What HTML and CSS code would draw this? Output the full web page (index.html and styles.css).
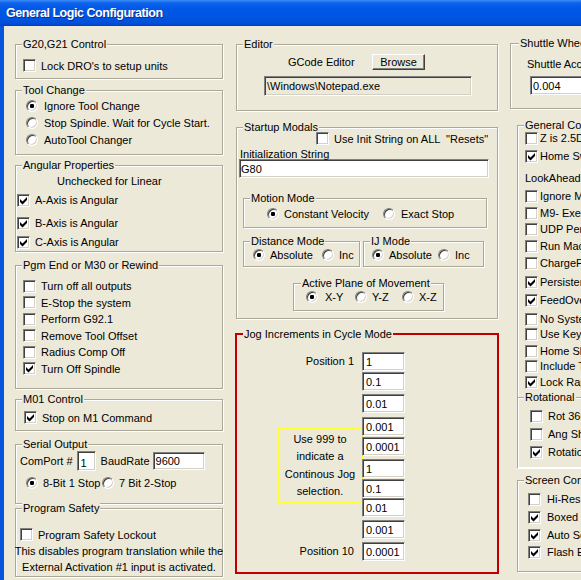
FILE: index.html
```html
<!DOCTYPE html>
<html>
<head>
<meta charset="utf-8">
<title>General Logic Configuration</title>
<link rel="stylesheet" href="styles.css">
</head>
<body>
<div class="window">
  <div class="titlebar"><span class="title">General Logic Configuration</span></div>
  <div class="client">

    <div class="col col-left">
      <fieldset class="group">
        <legend>G20,G21 Control</legend>
        <div class="body b-g20">
          <div class="row"><span class="cb"></span><span class="lbl">Lock DRO's to setup units</span></div>
        </div>
      </fieldset>

      <fieldset class="group mt5">
        <legend>Tool Change</legend>
        <div class="body b-tool">
          <div class="row"><span class="rb on"></span><span class="lbl">Ignore Tool Change</span></div>
          <div class="row"><span class="rb"></span><span class="lbl">Stop Spindle. Wait for Cycle Start.</span></div>
          <div class="row"><span class="rb"></span><span class="lbl">AutoTool Changer</span></div>
        </div>
      </fieldset>

      <fieldset class="group mt4">
        <legend>Angular Properties</legend>
        <div class="body b-ang">
          <div class="row note-row">Unchecked for Linear</div>
          <div class="row h16 mt3"><span class="cb"><svg viewBox="0 0 9 9"><path d="M1 3 L3.5 5.5 L8 1 L8 4 L3.5 8.5 L1 6 Z"/></svg></span><span class="lbl">A-Axis is Angular</span></div>
          <div class="row h16 mt7"><span class="cb"><svg viewBox="0 0 9 9"><path d="M1 3 L3.5 5.5 L8 1 L8 4 L3.5 8.5 L1 6 Z"/></svg></span><span class="lbl">B-Axis is Angular</span></div>
          <div class="row h16 mt3"><span class="cb"><svg viewBox="0 0 9 9"><path d="M1 3 L3.5 5.5 L8 1 L8 4 L3.5 8.5 L1 6 Z"/></svg></span><span class="lbl">C-Axis is Angular</span></div>
        </div>
      </fieldset>

      <fieldset class="group mt7">
        <legend>Pgm End or M30 or Rewind</legend>
        <div class="body b-pgm">
          <div class="row h165"><span class="cb"></span><span class="lbl">Turn off all outputs</span></div>
          <div class="row h165"><span class="cb"></span><span class="lbl">E-Stop the system</span></div>
          <div class="row h165"><span class="cb"></span><span class="lbl">Perform G92.1</span></div>
          <div class="row h165"><span class="cb"></span><span class="lbl">Remove Tool Offset</span></div>
          <div class="row h165"><span class="cb"></span><span class="lbl">Radius Comp Off</span></div>
          <div class="row h165"><span class="cb"><svg viewBox="0 0 9 9"><path d="M1 3 L3.5 5.5 L8 1 L8 4 L3.5 8.5 L1 6 Z"/></svg></span><span class="lbl">Turn Off Spindle</span></div>
        </div>
      </fieldset>

      <fieldset class="group mt4">
        <legend>M01 Control</legend>
        <div class="body b-m01">
          <div class="row"><span class="cb"><svg viewBox="0 0 9 9"><path d="M1 3 L3.5 5.5 L8 1 L8 4 L3.5 8.5 L1 6 Z"/></svg></span><span class="lbl">Stop on M1 Command</span></div>
        </div>
      </fieldset>

      <fieldset class="group mt7">
        <legend>Serial Output</legend>
        <div class="body b-serial">
          <div class="row serial-row">
            <span>ComPort #</span>
            <span class="tf tf-com">1</span>
            <span class="baud-lbl">BaudRate</span>
            <span class="tf tf-baud">9600</span>
          </div>
          <div class="row mt3 serial-radios">
            <span class="ritem ritem-8"><span class="rb on"></span><span class="lbl">8-Bit 1 Stop</span></span>
            <span class="ritem"><span class="rb"></span><span class="lbl">7 Bit 2-Stop</span></span>
          </div>
        </div>
      </fieldset>

      <fieldset class="group mt-2">
        <legend>Program Safety</legend>
        <div class="body b-safety">
          <div class="row safety-row"><span class="cb"></span><span class="lbl">Program Safety Lockout</span></div>
          <div class="note">This disables program translation while the</div>
          <div class="note">External Activation #1 input is activated.</div>
        </div>
      </fieldset>
    </div>

    <div class="col col-mid">
      <fieldset class="group">
        <legend>Editor</legend>
        <div class="body b-editor">
          <div class="row h16 editor-row">
            <span class="editor-lbl">GCode Editor</span>
            <span class="btn">Browse</span>
          </div>
          <div class="tf tf-path">\Windows\Notepad.exe</div>
        </div>
      </fieldset>

      <fieldset class="group mt10">
        <legend>Startup Modals</legend>
        <div class="body b-startup">
          <div class="row mt-4 init-all"><span class="cb"></span><span class="lbl pre">Use Init String on ALL  "Resets"</span></div>
          <div class="row h13 init-lbl">Initialization String</div>
          <div class="tf tf-init">G80</div>

          <fieldset class="group motion">
            <legend>Motion Mode</legend>
            <div class="body b-small">
              <div class="row motion-row">
                <span class="ritem ritem-cv"><span class="rb on"></span><span class="lbl">Constant Velocity</span></span>
                <span class="ritem"><span class="rb"></span><span class="lbl l6">Exact Stop</span></span>
              </div>
            </div>
          </fieldset>

          <div class="modes">
            <fieldset class="group dist">
              <legend>Distance Mode</legend>
              <div class="body b-tiny">
                <div class="row mt-2 dist-row">
                  <span class="ritem ritem-abs"><span class="rb on"></span><span class="lbl">Absolute</span></span>
                  <span class="ritem"><span class="rb"></span><span class="lbl">Inc</span></span>
                </div>
              </div>
            </fieldset>
            <fieldset class="group ij">
              <legend>IJ Mode</legend>
              <div class="body b-tiny">
                <div class="row mt-2 ij-row">
                  <span class="ritem ritem-ij"><span class="rb on"></span><span class="lbl">Absolute</span></span>
                  <span class="ritem"><span class="rb"></span><span class="lbl">Inc</span></span>
                </div>
              </div>
            </fieldset>
          </div>

          <fieldset class="group plane">
            <legend>Active Plane of Movement</legend>
            <div class="body b-small">
              <div class="row mt-2 plane-row">
                <span class="ritem ritem-xy"><span class="rb on"></span><span class="lbl l7">X-Y</span></span>
                <span class="ritem ritem-yz"><span class="rb"></span><span class="lbl">Y-Z</span></span>
                <span class="ritem"><span class="rb"></span><span class="lbl">X-Z</span></span>
              </div>
            </div>
          </fieldset>
        </div>
      </fieldset>

      <fieldset class="group jog mt8">
        <legend>Jog Increments in Cycle Mode</legend>
        <div class="body b-jog">
          <div class="jog-left">
            <div class="pos-lbl">Position 1</div>
            <div class="hint">
              <span>Use 999 to</span>
              <span>indicate a</span>
              <span>Continous Jog</span>
              <span>selection.</span>
            </div>
            <div class="pos-lbl pos-10">Position 10</div>
          </div>
          <div class="jog-fields">
            <span class="tf tf-jog">1</span>
            <span class="tf tf-jog">0.1</span>
            <span class="tf tf-jog">0.01</span>
            <span class="tf tf-jog">0.001</span>
            <span class="tf tf-jog">0.0001</span>
            <span class="tf tf-jog">1</span>
            <span class="tf tf-jog">0.1</span>
            <span class="tf tf-jog">0.01</span>
            <span class="tf tf-jog">0.001</span>
            <span class="tf tf-jog">0.0001</span>
          </div>
        </div>
      </fieldset>
    </div>

    <div class="col col-right">
      <fieldset class="group shuttle">
        <legend>Shuttle Wheel Setting</legend>
        <div class="body b-shuttle">
          <div class="row h13 shuttle-lbl">Shuttle Accel</div>
          <div class="tf tf-shuttle">0.004</div>
        </div>
      </fieldset>

      <fieldset class="group general mt10">
        <legend>General Configuration</legend>
        <div class="body b-general">
          <div class="row h16 mt-2"><span class="cb"></span><span class="lbl l2">Z is 2.5D on Output #6</span></div>
          <div class="row h16 mt2"><span class="cb"><svg viewBox="0 0 9 9"><path d="M1 3 L3.5 5.5 L8 1 L8 4 L3.5 8.5 L1 6 Z"/></svg></span><span class="lbl l2">Home Sw. Safety</span></div>
          <div class="row h16 mt6">LookAhead&nbsp;&nbsp;20&nbsp;&nbsp;Lines</div>
          <div class="row h16 mt2"><span class="cb"></span><span class="lbl l2">Ignore M calls while loading</span></div>
          <div class="row h16 mt1"><span class="cb"></span><span class="lbl l2">M9- Execute Macro</span></div>
          <div class="row h16"><span class="cb"></span><span class="lbl l2">UDP Pendant</span></div>
          <div class="row h16 mt1"><span class="cb"></span><span class="lbl l2">Run Macropump</span></div>
          <div class="row h16 mt1"><span class="cb"></span><span class="lbl l2">ChargePump2 On</span></div>
          <div class="row h16 mt3"><span class="cb"><svg viewBox="0 0 9 9"><path d="M1 3 L3.5 5.5 L8 1 L8 4 L3.5 8.5 L1 6 Z"/></svg></span><span class="lbl l2">Persistent Jog Mode</span></div>
          <div class="row h16 mt2"><span class="cb"><svg viewBox="0 0 9 9"><path d="M1 3 L3.5 5.5 L8 1 L8 4 L3.5 8.5 L1 6 Z"/></svg></span><span class="lbl l2">FeedOverride Persists</span></div>
          <div class="row h16 mt3"><span class="cb"></span><span class="lbl l2">No System Reset</span></div>
          <div class="row h16 mt-1"><span class="cb"></span><span class="lbl l2">Use Key Clicks</span></div>
          <div class="row h16 mt1"><span class="cb"></span><span class="lbl l2">Home Slave with Master</span></div>
          <div class="row h16 mt-1"><span class="cb"></span><span class="lbl l2">Include Threads</span></div>
          <div class="row h16"><span class="cb"><svg viewBox="0 0 9 9"><path d="M1 3 L3.5 5.5 L8 1 L8 4 L3.5 8.5 L1 6 Z"/></svg></span><span class="lbl l2">Lock Rapid FRO</span></div>

          <fieldset class="group rot mt1">
            <legend>Rotational</legend>
            <div class="body b-rot">
              <div class="row h16 mt4"><span class="cb"></span><span class="lbl">Rot 360 Rollover</span></div>
              <div class="row h16 mt2"><span class="cb"></span><span class="lbl">Ang Short Rot on G0</span></div>
              <div class="row h16 mt2"><span class="cb"><svg viewBox="0 0 9 9"><path d="M1 3 L3.5 5.5 L8 1 L8 4 L3.5 8.5 L1 6 Z"/></svg></span><span class="lbl">Rotational Soft Limits</span></div>
            </div>
          </fieldset>
        </div>
      </fieldset>

      <fieldset class="group screen mt6">
        <legend>Screen Controls</legend>
        <div class="body b-screen">
          <div class="row h16 mt4"><span class="cb"></span><span class="lbl l6">Hi-Res Jog</span></div>
          <div class="row h16 mt2"><span class="cb"><svg viewBox="0 0 9 9"><path d="M1 3 L3.5 5.5 L8 1 L8 4 L3.5 8.5 L1 6 Z"/></svg></span><span class="lbl l6">Boxed DRO</span></div>
          <div class="row h16 mt2"><span class="cb"><svg viewBox="0 0 9 9"><path d="M1 3 L3.5 5.5 L8 1 L8 4 L3.5 8.5 L1 6 Z"/></svg></span><span class="lbl l6">Auto Screen Enlarge</span></div>
          <div class="row h16 mt1"><span class="cb"><svg viewBox="0 0 9 9"><path d="M1 3 L3.5 5.5 L8 1 L8 4 L3.5 8.5 L1 6 Z"/></svg></span><span class="lbl l6">Flash Errors</span></div>
        </div>
      </fieldset>
    </div>

  </div>
</div>
</body>
</html>
```

FILE: styles.css
```css
* { box-sizing: border-box; }
html, body { margin: 0; padding: 0; }
body {
  width: 581px;
  height: 580px;
  overflow: hidden;
  background: #ECE9D8;
  font-family: "Liberation Sans", Arial, sans-serif;
  font-size: 11px;
  color: #000;
}
.window { width: 581px; height: 580px; display: flex; flex-direction: column; }
.titlebar {
  height: 26px;
  flex: none;
  display: flex;
  align-items: center;
  padding-left: 6px;
  background: linear-gradient(180deg, #3A8AF6 0px, #0D63EC 3px, #0058E6 8px, #0055E3 17px, #0050DA 23px, #0040C0 26px);
}
.title {
  color: #fff;
  font-weight: bold;
  font-size: 12.5px;
  letter-spacing: -0.45px;
  text-shadow: 1px 1px 0 #0B2C8F;
  white-space: nowrap;
}
.client {
  flex: 1;
  display: flex;
  align-items: flex-start;
  border-left: 4px solid #0855DD;
  overflow: hidden;
}
.col { flex: none; display: flex; flex-direction: column; }
.col-left { width: 208px; margin-left: 11px; padding-top: 12px; }
.col-mid { width: 262px; margin-left: 13px; padding-top: 12px; }
.col-right { width: 230px; margin-left: 12px; padding-top: 11px; }

.group {
  margin: 0;
  padding: 0;
  min-width: 0;
  border: 1px solid #ACA899;
  box-shadow: inset 1px 1px 0 #fff, 1px 1px 0 #fff;
}
.group > legend {
  margin-left: 6px;
  padding: 0 1px;
  height: 13px;
  line-height: 13px;
  background: #ECE9D8;
  white-space: nowrap;
}

.mt-4 { margin-top: -4px; }
.mt-2 { margin-top: -2px; }
.mt-1 { margin-top: -1px; }
.mt1 { margin-top: 1px; }
.mt2 { margin-top: 2px; }
.mt3 { margin-top: 3px; }
.mt4 { margin-top: 4px; }
.mt5 { margin-top: 5px; }
.mt6 { margin-top: 6px; }
.mt7 { margin-top: 7px; }
.mt8 { margin-top: 8px; }
.mt10 { margin-top: 10px; }

.row { display: flex; align-items: center; height: 17px; white-space: nowrap; flex: none; }
.row.h16 { height: 16px; }
.row.h165 { height: 16.5px; }
.row.h13 { height: 13px; }
.lbl { margin-left: 5px; }
.lbl.l2 { margin-left: 2px; }
.lbl.l6 { margin-left: 6px; }
.lbl.l7 { margin-left: 7px; }
.pre { white-space: pre; }

.cb {
  flex: none;
  width: 13px;
  height: 13px;
  padding: 1px;
  display: flex;
  background: #fff;
  border: 1px solid;
  border-color: #808080 #fff #fff #808080;
  box-shadow: inset 1px 1px 0 #404040, inset -1px -1px 0 #D4D0C8;
}
.cb svg { width: 9px; height: 9px; display: block; fill: #000; }
.rb {
  flex: none;
  width: 12px;
  height: 12px;
  border-radius: 50%;
  background: #fff;
  border: 1px solid;
  border-color: #808080 #fff #fff #808080;
  box-shadow: inset 1px 1px 0 #404040, inset -1px -1px 0 #D4D0C8;
}
.rb.on { background: radial-gradient(circle at 50% 50%, #000 0, #000 2px, #fff 2.4px); }
.ritem { display: flex; align-items: center; flex: none; }

.tf {
  flex: none;
  display: flex;
  align-items: center;
  white-space: nowrap;
  overflow: hidden;
  padding-left: 2px;
  background: #fff;
  border: 1px solid;
  border-color: #808080 #fff #fff #808080;
  box-shadow: inset 1px 1px 0 #404040, inset -1px -1px 0 #D4D0C8;
}
.btn {
  flex: none;
  width: 53px;
  height: 16px;
  display: flex;
  align-items: center;
  justify-content: center;
  background: #ECE9D8;
  border: 1px solid;
  border-color: #fff #404040 #404040 #fff;
  box-shadow: inset -1px -1px 0 #808080;
}

/* left column */
.b-g20 { padding: 6px 0 4px 7px; }
.b-tool { padding: 0 0 6px 10px; }
.b-tool .lbl { margin-left: 6px; }
.b-ang { padding: 0 0 1px 1px; }
.note-row { padding-left: 40px; }
.b-pgm { padding: 6px 0 11px 7px; }
.b-m01 { padding: 3px 0 4px 8px; }
.b-serial { padding: 0 0 12px 4px; }
.serial-row { height: 20px; }
.tf-com { width: 19px; height: 20px; margin-left: 4px; padding-top: 4px; padding-left: 3px; }
.baud-lbl { margin-left: 5px; }
.tf-baud { width: 52px; height: 18px; margin-left: 3px; }
.serial-radios { padding-left: 6px; }
.ritem-8 { width: 76px; }
.b-safety { padding: 11px 0 1px 0; }
.safety-row { padding-left: 4px; }
.note { display: flex; justify-content: center; height: 16px; line-height: 16px; white-space: nowrap; }

/* middle column */
.b-editor { padding: 3px 0 14px 0; }
.editor-row { padding-left: 51px; }
.editor-lbl { width: 84px; flex: none; }
.tf-path { width: 208px; height: 20px; margin: 6px 0 0 27px; background: #ECE9D8; }
.b-startup { padding: 0 0 7px 0; }
.init-all { padding-left: 79px; }
.init-lbl { padding-left: 3px; }
.tf-init { width: 250px; height: 19px; margin: -1px 0 0 2px; padding-left: 1px; }
.motion { width: 244px; margin: 14px 0 0 6px; }
.b-small { padding: 0 0 5px 0; }
.b-tiny { padding: 0 0 3px 0; }
.motion-row { padding-left: 23px; }
.ritem-cv { width: 116px; }
.modes { display: flex; margin: 7px 0 0 6px; }
.dist { width: 117px; }
.ij { width: 121px; margin-left: 3px; }
.dist-row { padding-left: 9px; }
.ritem-abs { width: 69px; }
.ij-row { padding-left: 8px; }
.ritem-ij { width: 66px; }
.plane { width: 151px; margin: 10px 0 0 56px; }
.plane > legend { margin-left: 7px; }
.plane-row { padding-left: 12px; }
.ritem-xy { width: 49px; }
.ritem-yz { width: 47px; }

.jog {
  width: 264px;
  margin-left: -1px;
  border: 2px solid #C00000;
  box-shadow: none;
}
.jog > legend { height: 14px; line-height: 14px; }
.b-jog { display: flex; padding: 11px 0 11px 0; }
.jog-left { width: 125px; flex: none; display: flex; flex-direction: column; }
.pos-lbl { height: 19px; line-height: 19px; text-align: right; padding-right: 8px; }
.pos-10 { margin-top: 38px; }
.hint {
  margin: 56px 0 0 40px;
  width: 86px;
  height: 77px;
  border: 2px solid #FFFF33;
  display: flex;
  flex-direction: column;
  justify-content: center;
  align-items: center;
  line-height: 17.5px;
  white-space: nowrap;
}
.jog-fields { display: flex; flex-direction: column; }
.tf-jog { width: 43px; height: 19px; padding-left: 3px; }
.tf-jog:nth-child(2) { margin-top: 1px; }
.tf-jog:nth-child(3) { margin-top: 3px; }
.tf-jog:nth-child(4) { margin-top: 4px; }
.tf-jog:nth-child(5) { margin-top: 1px; }
.tf-jog:nth-child(6) { margin-top: 3px; }
.tf-jog:nth-child(7) { margin-top: 1px; }
.tf-jog:nth-child(8) { margin-top: 0; }
.tf-jog:nth-child(9) { margin-top: 3px; }
.tf-jog:nth-child(10) { margin-top: 3px; }

/* right column */
.shuttle > legend { margin-left: 8px; }
.b-shuttle { padding: 7px 0 13px 0; }
.shuttle-lbl { padding-left: 16px; }
.tf-shuttle { width: 120px; height: 19px; margin: 6px 0 0 19px; }
.general { margin-left: 7px; }
.b-general { padding: 0; }
.b-general > .row { padding-left: 7px; }
.rot { margin-left: -1px; border-bottom: none; }
.b-rot { padding: 0 0 7px 0; }
.b-rot > .row { padding-left: 12px; }
.screen { margin-left: 7px; }
.b-screen { padding: 0 0 11px 0; }
.b-screen > .row { padding-left: 10px; }
```
